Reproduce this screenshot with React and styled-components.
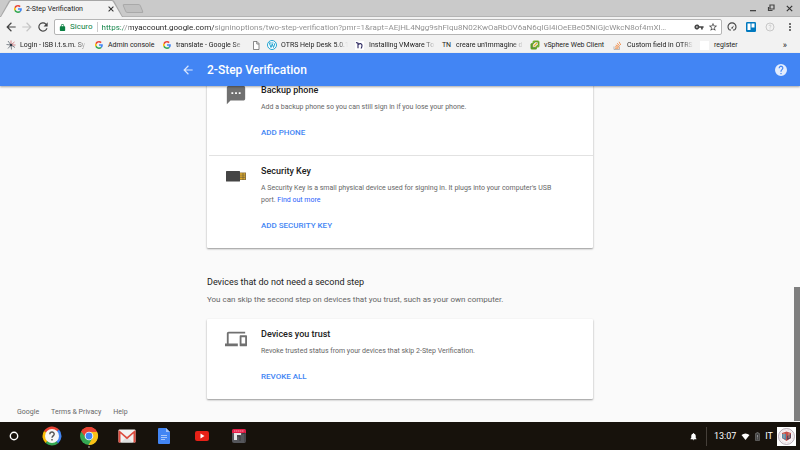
import React from 'react';
import styled, { createGlobalStyle } from 'styled-components';

const GlobalStyle = createGlobalStyle`
  * { box-sizing: border-box; }
  body { margin: 0; font-family: Roboto, "Liberation Sans", sans-serif; }
  button { border: 0; padding: 0; background: none; font: inherit; color: inherit; cursor: pointer; }
  a { color: inherit; text-decoration: none; }
  h1, h2, h3, p { margin: 0; }
  svg { display: block; flex: none; }
`;

const Screen = styled.div`
  display: flex;
  flex-direction: column;
  height: 100vh;
  overflow: hidden;
  background: #fafafa;
`;

/* ---------- browser frame ---------- */

const TabStrip = styled.div`
  display: flex;
  align-items: flex-end;
  height: 17px;
  flex: none;
  background: #cacaca;
  border-bottom: 1px solid #b4b4b4;
`;

const TabEdge = styled.div`
  width: 123px;
  height: 17px;
  margin-bottom: -1px;
  padding: 1px 1px 0;
  background: #a6a6a6;
  clip-path: polygon(0 100%, 9px 4%, 11px 0, 112px 0, 114px 4%, 100% 100%);
`;

const Tab = styled.div`
  display: flex;
  align-items: center;
  height: 16px;
  padding: 0 7px 0 13px;
  background: #f2f2f2;
  clip-path: polygon(0 100%, 9px 4%, 10px 0, 111px 0, 112px 4%, 100% 100%);
  font-size: 7px;
  line-height: 16px;
  color: #222;
`;

const TabTitle = styled.span`
  flex: 1;
  margin-left: 4px;
  white-space: nowrap;
`;

const NewTab = styled.button`
  width: 18px;
  height: 9px;
  margin: 0 0 3px 1px;
  background: #c0c0c0;
  border: 1px solid #a9a9a9;
  border-radius: 2px;
  transform: skewX(22deg);
`;

const WindowControls = styled.div`
  display: flex;
  align-self: center;
  gap: 10px;
  margin-left: auto;
  padding-right: 6px;
`;

const Toolbar = styled.div`
  display: flex;
  align-items: center;
  height: 20px;
  flex: none;
  padding: 0 4px;
  background: #f2f2f2;
`;

const NavButtons = styled.div`
  display: flex;
  gap: 2px;
  width: 50px;
`;

const AddressBar = styled.div`
  display: flex;
  align-items: center;
  flex: 1;
  min-width: 0;
  height: 16px;
  padding: 0 3px 0 4px;
  gap: 4px;
  background: #fff;
  border: 1px solid #b5b5b5;
  border-radius: 2px;
  font-size: 8px;
`;

const Secure = styled.span`
  padding-right: 4px;
  border-right: 1px solid #ccc;
  line-height: 10px;
  color: #0b8043;
`;

const Address = styled.input`
  flex: 1;
  min-width: 0;
  height: 14px;
  padding: 0;
  border: 0;
  outline: 0;
  font-family: inherit;
  font-size: 8px;
  color: transparent;
  background: linear-gradient(90deg, #0b8043 21px, #8b8b8b 21px 27px, #222 27px 112px, #8b8b8b 112px);
  background-clip: text;
`;

const Extensions = styled.div`
  display: flex;
  align-items: center;
  gap: 9px;
  padding-left: 5px;
`;

const Bookmarks = styled.nav`
  display: flex;
  align-items: center;
  gap: 7px;
  height: 16px;
  flex: none;
  padding: 0 13px 0 6px;
  background: #f2f2f2;
  font-size: 7px;
  color: #222;
`;

const Bookmark = styled.a`
  display: flex;
  align-items: center;
  gap: 5px;
  flex: none;
`;

const BookmarkIcon = styled.span`
  display: flex;
  justify-content: center;
  width: 9px;
  font-size: 7px;
`;

const BookmarkLabel = styled.span`
  width: ${(p) => p.$width}px;
  white-space: nowrap;
  line-height: 12px;
  mask-image: ${(p) => (p.$fade ? 'linear-gradient(90deg, #000 84%, transparent)' : 'none')};
`;

const More = styled.button`
  margin-left: auto;
  font-size: 9px;
`;

/* ---------- account page ---------- */

const AppBar = styled.header`
  position: relative;
  z-index: 1;
  display: grid;
  grid-template-columns: 1fr 386px 1fr;
  align-items: center;
  height: 33px;
  flex: none;
  background: #4285f4;
  color: #fff;
  box-shadow: 0 1px 2px rgba(0, 0, 0, 0.35);
`;

const BarButton = styled.button`
  justify-self: end;
  margin-right: ${(p) => p.$gap}px;
`;

const BarTitle = styled.h1`
  font-size: 12px;
  font-weight: 500;
  line-height: 16px;
`;

const Body = styled.div`
  display: flex;
  flex: 1;
  min-height: 0;
`;

const Page = styled.main`
  display: flex;
  flex-direction: column;
  justify-content: flex-end;
  flex: 1;
  overflow: hidden;
`;

const ScrollTrack = styled.div`
  display: flex;
  align-items: flex-end;
  width: 6px;
  margin-left: -6px;
  padding-bottom: 1px;
`;

const ScrollThumb = styled.div`
  width: 6px;
  height: 40%;
  background: #7f7f7f;
`;

const Column = styled.div`
  width: 386px;
  max-width: 100%;
  margin: 0 auto;
`;

const Card = styled.section`
  background: #fff;
  border-radius: 1px;
  box-shadow: 0 1px 2px rgba(0, 0, 0, 0.4);
`;

const Option = styled.article`
  display: grid;
  grid-template-columns: 36px 1fr;
  margin-left: 2px;
  padding: 9px 30px 16px 16px;
  & + & { border-top: 1px solid #e2e2e2; }
`;

const OptionIcon = styled.div`
  display: flex;
  align-items: center;
  height: 22px;
`;

const OptionTitle = styled.h3`
  font-size: 9px;
  font-weight: 500;
  line-height: 12px;
  color: #212121;
`;

const OptionText = styled.p`
  margin-top: 5px;
  font-size: 7px;
  line-height: 12px;
  color: #666;
  a { color: #2a62fb; }
`;

const Action = styled.button`
  margin-top: 14px;
  font-size: 8px;
  font-weight: 500;
  line-height: 12px;
  color: #4285f4;
`;

const Intro = styled.div`
  padding: 27px 0 12px;
`;

const IntroTitle = styled.h2`
  font-size: 9px;
  font-weight: 400;
  line-height: 14px;
  color: #222;
`;

const IntroText = styled.p`
  margin-top: 4px;
  font-size: 8px;
  line-height: 14px;
  color: #666;
`;

const Footer = styled.footer`
  display: flex;
  gap: 12px;
  padding: 7px 17px 4px;
  font-size: 7px;
  line-height: 12px;
  color: #666;
`;

/* ---------- shelf ---------- */

const Shelf = styled.footer`
  display: flex;
  align-items: center;
  justify-content: space-between;
  height: 28px;
  flex: none;
  padding: 0 4px;
  background: #17120c;
  color: #fff;
`;

const Launchers = styled.div`
  display: flex;
  align-items: center;
  justify-content: space-between;
  width: 245px;
`;

const Launcher = styled.button`
  display: flex;
  justify-content: center;
  width: 20px;
`;

const Tray = styled.div`
  display: flex;
  align-items: center;
  gap: 5px;
  font-size: 9px;
  line-height: 12px;
`;

const Clock = styled.time`
  display: flex;
  align-items: center;
  height: 19px;
  margin-left: 3px;
  padding-left: 7px;
  border-left: 1px solid #453f39;
`;

const Account = styled.div`
  display: flex;
  align-items: center;
  gap: 4px;
`;

/* ---------- icons ---------- */

const Svg = ({ size = 9, w, h, box = 24, children, ...rest }) => (
  <svg width={w || size} height={h || size} viewBox={typeof box === 'string' ? box : `0 0 ${box} ${box}`} fill="currentColor" aria-hidden="true" {...rest}>
    {children}
  </svg>
);

const GoogleG = ({ size = 8 }) => (
  <Svg size={size} box={48}>
    <path fill="#EA4335" d="M24 9.5c3.5 0 6.700 1.200 9.200 3.600l6.900-6.900C35.900 2.400 30.500 0 24 0 14.600 0 6.500 5.400 2.600 13.200l8 6.200C12.400 13.700 17.700 9.500 24 9.500z" />
    <path fill="#4285F4" d="M47 24.600c0-1.600-.2-3.100-.4-4.600H24v9h12.900c-.6 3-2.300 5.500-4.800 7.200l7.700 6C44.400 38 47 32 47 24.600z" />
    <path fill="#FBBC05" d="M10.500 28.600a14.500 14.500 0 0 1 0-9.200l-8-6.200a24 24 0 0 0 0 21.600z" />
    <path fill="#34A853" d="M24 48c6.500 0 11.900-2.100 15.900-5.800l-7.700-6c-2.200 1.500-4.900 2.300-8.200 2.300-6.300 0-11.600-4.200-13.500-9.900l-8 6.200C6.500 42.600 14.600 48 24 48z" />
  </Svg>
);

const Arrow = ({ size = 14, flip, color }) => (
  <Svg size={size} color={color} transform={flip ? 'scale(-1 1)' : undefined}>
    <path d="M20 11H7.830l5.590-5.590L12 4l-8 8 8 8 1.410-1.410L7.830 13H20z" />
  </Svg>
);

const Reload = () => (
  <Svg size={14} color="#444">
    <path d="M17.650 6.350A8 8 0 1 0 19.730 14h-2.080A6 6 0 1 1 12 6c1.660 0 3.140.690 4.220 1.780L13 11h7V4z" />
  </Svg>
);

const Close = ({ size = 8 }) => (
  <Svg size={size} box={10} color="#333"><path d="M2 2l6 6M8 2L2 8" stroke="currentColor" strokeWidth="1.3" /></Svg>
);

const Lock = () => (
  <Svg size={7} box="4 1 16 21" color="#0b8043">
    <path d="M18 8h-1V6A5 5 0 0 0 7 6v2H6a2 2 0 0 0-2 2v10c0 1.100.9 2 2 2h12a2 2 0 0 0 2-2V10a2 2 0 0 0-2-2zM9 6a3 3 0 0 1 6 0v2H9z" />
  </Svg>
);

const Key = () => (
  <Svg size={10} color="#444">
    <path d="M12.650 10a6 6 0 1 0 0 4H17v4h4v-4h2v-4zM7 14a2 2 0 1 1 0-4 2 2 0 0 1 0 4z" />
  </Svg>
);

const Star = () => (
  <Svg size={10} color="#444">
    <path d="M22 9.240l-7.190-.62L12 2 9.190 8.630 2 9.240l5.460 4.730L5.820 21 12 17.270 18.180 21l-1.630-7.030zM12 15.400l-3.760 2.270 1-4.280-3.320-2.880 4.380-.38L12 6.100l1.710 4.040 4.380.38-3.320 2.880 1 4.280z" />
  </Svg>
);

const Gauge = () => (
  <Svg size={10} box={20} color="#444">
    <path d="M5 16a8 8 0 1 1 10 0" fill="none" stroke="currentColor" strokeWidth="2.200" />
    <path d="M8 12l6-5-3.500 7z" /><path d="M5 15h3v2H5zM12 15h3v2h-3z" />
  </Svg>
);

const Trello = () => (
  <Svg size={10} box={20}><rect width="20" height="20" rx="2.500" fill="#0079bf" /><path fill="#fff" d="M3 3h6v13H3zM11 3h6v8h-6z" /></Svg>
);

const FaintCircle = () => (
  <Svg size={10} box={20}>
    <circle cx="10" cy="10" r="8" fill="none" stroke="#bdbdbd" strokeWidth="1.600" />
    <path d="M8 8c0-3 4-3 4 0 0 1.500-2 1.700-2 3.500M10 13v2" fill="none" stroke="#c4c4c4" strokeWidth="1.500" />
  </Svg>
);

const Dots = () => (
  <Svg w={12} h={10} box="0 0 12 10" color="#444"><circle cx="6" cy="2" r="1" /><circle cx="6" cy="5" r="1" /><circle cx="6" cy="8" r="1" /></Svg>
);

const Burst = () => (
  <Svg size={10} box={20}>
    <path d="M10 10L4 2M10 10L1 9M10 10L4 17M10 10L11 19M10 10L18 15" stroke="#59616b" strokeWidth="1.500" />
    <path d="M10 10L10 1M10 10L17 4M10 10L19 10" stroke="#c0484d" strokeWidth="1.300" />
    <circle cx="10" cy="10" r="2.500" fill="#2e3b49" />
  </Svg>
);

const PageIcon = () => (
  <Svg w={8} h={9} box="0 0 16 18"><path d="M3 1h7l4 4v12H3zM9.500 1v5H14" fill="#fff" stroke="#5c5c5c" strokeWidth="1.400" /></Svg>
);

const WordPress = () => (
  <Svg size={10} box={20}>
    <circle cx="10" cy="10" r="9" fill="#fff" stroke="#21a3d0" strokeWidth="2" />
    <path d="M4 6h4M8.500 6H13M4.800 6.500L8 15l2.500-7L13 15l2.800-8.500" fill="none" stroke="#21a3d0" strokeWidth="2" />
  </Svg>
);

const CurlyN = () => (
  <Svg size={9} box={18}><rect width="18" height="18" fill="#fff" /><path d="M2 3l4 1.500v10M6 7c5-3 8-2 8 2 0 3-.5 4-2 6" fill="none" stroke="#28245c" strokeWidth="2.200" /></Svg>
);

const VSphere = () => (
  <Svg size={10} box={20}>
    <rect x="1" y="6" width="13" height="13" rx="3" fill="#5c9f24" /><rect x="5" y="1" width="14" height="14" rx="3" fill="#75b52f" />
    <path d="M5 15v-5l5-6h6v5l-6 6z" fill="#fff" stroke="#395f20" strokeWidth="1" /><path d="M7 13l7-7" stroke="#e3b226" strokeWidth="2.500" />
  </Svg>
);

const StackIcon = () => (
  <Svg size={9} box={18}>
    <path d="M2 11v6h11v-6" fill="none" stroke="#aaa" strokeWidth="1.600" />
    <path d="M4 14.500h7M4.200 11.500l7 1M5.500 8l6.500 3M8 4.500l5.500 5M12 1.500l3.500 6.500" stroke="#f08b45" strokeWidth="1.800" />
  </Svg>
);

const BlankIcon = () => <Svg size={9} box={9}><rect width="9" height="9" fill="#fff" /></Svg>;

const HelpCircle = () => (
  <Svg size={12} box="2 2 20 20" color="#e4edfd">
    <path d="M12 2a10 10 0 1 0 0 20 10 10 0 0 0 0-20zm1 17h-2v-2h2zm2.070-7.750l-.9.920C13.450 12.900 13 13.500 13 15h-2v-.5c0-1.100.45-2.100 1.170-2.830l1.240-1.260A2 2 0 1 0 10 9H8a4 4 0 1 1 7.070 2.250z" />
  </Svg>
);

const MessageIcon = () => (
  <Svg size={22} color="#707070">
    <path d="M20 2H4c-1.100 0-1.990.9-1.990 2L2 22l4-4h14c1.100 0 2-.9 2-2V4c0-1.100-.9-2-2-2zM9 11H7V9h2zm4 0h-2V9h2zm4 0h-2V9h2z" />
  </Svg>
);

const UsbKey = () => (
  <Svg w={22} h={12} box="0 0 22 12">
    <rect x="1" y="1" width="14" height="10.500" rx=".5" fill="#454545" /><rect x="15" y="2.500" width="6" height="7.500" fill="#8d7440" />
    <path d="M15 4h5M15 6.200h5M15 8.500h5" stroke="#e0ac2b" strokeWidth="1.300" /><path d="M18 3v7" stroke="#5d4d2e" strokeWidth=".6" />
  </Svg>
);

const DevicesIcon = () => (
  <Svg size={22} box={24} color="#707070">
    <path d="M4 6h18V4H4c-1.100 0-2 .9-2 2v11H0v3h14v-3H4zm19 2h-6c-.55 0-1 .45-1 1v10c0 .55.45 1 1 1h6c.55 0 1-.45 1-1V9c0-.55-.45-1-1-1zm-1 9h-4v-7h4z" />
  </Svg>
);

const HomeRing = () => <Svg size={10} box={10}><circle cx="5" cy="5" r="3.700" fill="none" stroke="#fff" strokeWidth="1.400" /></Svg>;

const HelpApp = () => (
  <Svg size={20} box={20}>
    <path d="M10 10L2 5A9.500 9.500 0 0 1 17 3.600z" fill="#ea4335" /><path d="M10 10l7-6.400A9.500 9.500 0 0 1 16 17.400z" fill="#4285f4" />
    <path d="M10 10l6 7.400A9.500 9.500 0 0 1 3.500 17z" fill="#34a853" /><path d="M10 10l-6.500 7A9.500 9.500 0 0 1 2 5z" fill="#fbbc05" />
    <circle cx="10" cy="10" r="7" fill="#f7f7f7" />
    <path d="M7.800 8.200c.2-3 4.600-2.700 4.400 0-.1 1.600-2.200 1.800-2.200 3.600M10 13v1.500" fill="none" stroke="#555" strokeWidth="1.400" />
  </Svg>
);

const ChromeApp = () => (
  <Svg w={20} h={24} box="0 0 20 24">
    <circle cx="10" cy="12" r="9" fill="#34a853" />
    <path d="M10 12L2.200 7.500A9 9 0 0 1 17.800 7.500z" fill="#ea4335" /><path d="M10 7.800h8A9 9 0 0 1 9.500 21l4-7z" fill="#fbc116" />
    <path d="M2.200 7.500L7 14l3-6.200h8A9 9 0 0 0 2.200 7.500z" fill="#ea4335" />
    <circle cx="10" cy="12" r="4.300" fill="#fff" /><circle cx="10" cy="12" r="3.400" fill="#4285f4" />
    <circle cx="10" cy="23" r=".8" fill="#bbb" />
  </Svg>
);

const GmailApp = () => (
  <Svg w={18} h={14} box="0 0 18 14">
    <rect x=".5" y=".5" width="17" height="13" rx="1" fill="#f1f1f1" /><path d="M3 13.500l6-6 6 6z" fill="#dedede" />
    <path d="M.5 13.500V1.500h.9L9 8l7.600-6.500h.9v12h-2V4.600L9 10.200 2.500 4.600v8.900z" fill="#dd4b3e" />
  </Svg>
);

const DocsApp = () => (
  <Svg w={14} h={18} box="0 0 14 18">
    <path d="M2 1h7l4 4v11a1 1 0 0 1-1 1H2a1 1 0 0 1-1-1V2a1 1 0 0 1 1-1z" fill="#4285f4" /><path d="M9 1l4 4H9z" fill="#a1c2fa" />
    <path d="M4 8.500h6M4 10.500h6M4 12.500h4" stroke="#a9c7fb" />
  </Svg>
);

const YouTubeApp = () => (
  <Svg w={16} h={12} box="0 0 16 12"><rect x="1" y="1" width="14" height="10" rx="2" fill="#e62117" /><path d="M6.500 3.500l4 2.500-4 2.500z" fill="#fff" /></Svg>
);

const RecorderApp = () => (
  <Svg size={16} box={16}>
    <rect x="1" y="1" width="14" height="14" rx="2" fill="#55565b" /><path d="M1 5V3a2 2 0 0 1 2-2h10a2 2 0 0 1 2 2v2z" fill="#e51c47" />
    <path d="M3 3h10" stroke="#f59cad" strokeWidth="1" strokeDasharray="1.500 .5" /><path d="M3 5h7v2H6v5H3z" fill="#e4e4e4" /><path d="M6 8h3v5M11 6l3-1v9" fill="none" stroke="#303136" strokeWidth=".8" />
  </Svg>
);

const Bell = () => <Svg size={9}><path d="M12 22a2 2 0 0 0 2-2h-4a2 2 0 0 0 2 2zm6-6v-5c0-3.100-1.600-5.600-4.500-6.300V4a1.500 1.500 0 0 0-3 0v.7C7.600 5.400 6 7.900 6 11v5l-2 2v1h16v-1z" /></Svg>;
const Wifi = () => <Svg size={9} box={18}><path d="M9 16L1 6c5-4 11-4 16 0z" /></Svg>;
const Battery = () => <Svg w={5} h={9} box="0 0 10 18"><path d="M3.500 1h3v2H9v14H1V3h2.500z" fill="#444" stroke="#888" /><path d="M5 6v5M5 13v1.500" stroke="#aaa" strokeWidth="1.500" /></Svg>;

const Avatar = () => (
  <Svg size={19} box={19}>
    <rect width="19" height="19" fill="#fff" /><circle cx="9.500" cy="9.500" r="8" fill="#f8f5f6" stroke="#a797a4" strokeWidth=".8" />
    <circle cx="9.500" cy="9.500" r="6.300" fill="none" stroke="#ddc9d0" strokeWidth=".7" strokeDasharray="1 .7" />
    <path d="M5 6l4.500-1.500L14 6v5l-4.500 3L5 11z" fill="#c4504a" /><path d="M5 7h4v6l-4-2z" fill="#5889a8" /><path d="M10 9l4-2v4l-4 2z" fill="#5c4359" />
    <path d="M7 6v5M12 6v5" stroke="#e0b79a" strokeWidth=".7" />
  </Svg>
);

const pageAddress =
  'https://myaccount.google.com/signinoptions/two-step-verification?pmr=1&rapt=AEjHL4Ngg9shFIqu8N02KwOaRbOV6aN6qIGI4iOeEBe05NiGjcWkcN8of4mXI…';

const bookmarks = [
  { icon: <Burst />, label: 'Login - ISB i.t.s.m. Sy', width: 67, fade: true },
  { icon: <GoogleG />, label: 'Admin console', width: 47 },
  { icon: <GoogleG />, label: 'translate - Google Se', width: 68, fade: true },
  { icon: <PageIcon />, name: 'Untitled' },
  { icon: <WordPress />, label: 'OTRS Help Desk 5.0.1', width: 67, fade: true },
  { icon: <CurlyN />, label: 'Installing VMware To', width: 66, fade: true },
  { icon: 'TN', label: "creare un'immagine d", width: 67, fade: true },
  { icon: <VSphere />, label: 'vSphere Web Client', width: 62 },
  { icon: <StackIcon />, label: 'Custom field in OTRS', width: 66, fade: true },
  { icon: <BlankIcon />, label: 'register', width: 26 },
];

const launchers = [
  ['Launcher', HomeRing], ['Get Help', HelpApp], ['Chrome', ChromeApp], ['Gmail', GmailApp],
  ['Docs', DocsApp], ['YouTube', YouTubeApp], ['Recorder', RecorderApp],
];

const StepOption = ({ icon, title, action, children }) => (
  <Option>
    <OptionIcon>{icon}</OptionIcon>
    <div>
      <OptionTitle>{title}</OptionTitle>
      <OptionText>{children}</OptionText>
      <Action>{action}</Action>
    </div>
  </Option>
);

export default function App() {
  return (
    <Screen>
      <GlobalStyle />
      <TabStrip>
        <TabEdge>
          <Tab>
            <GoogleG />
            <TabTitle>2-Step Verification</TabTitle>
            <button aria-label="Close tab"><Close /></button>
          </Tab>
        </TabEdge>
        <NewTab aria-label="New tab" />
        <WindowControls>
          <button aria-label="Minimize"><Svg size={8} box={8}><path d="M1 6h6v1.300H1z" fill="#444" /></Svg></button>
          <button aria-label="Restore"><Svg size={8} box={8}><path d="M3 1h4v4H3zM1.500 3v3.500H5.500" fill="none" stroke="#444" strokeWidth="1.200" /></Svg></button>
          <button aria-label="Close window"><Close size={9} /></button>
        </WindowControls>
      </TabStrip>
      <Toolbar>
        <NavButtons>
          <button aria-label="Back"><Arrow color="#444" /></button>
          <button aria-label="Forward"><Arrow color="#c4c4c4" flip /></button>
          <button aria-label="Reload"><Reload /></button>
        </NavButtons>
        <AddressBar>
          <Lock />
          <Secure>Sicuro</Secure>
          <Address type="text" aria-label="Address" defaultValue={pageAddress} spellCheck={false} />
          <Key />
          <Star />
        </AddressBar>
        <Extensions>
          <button aria-label="Page speed"><Gauge /></button>
          <button aria-label="Trello"><Trello /></button>
          <button aria-label="Extension"><FaintCircle /></button>
          <button aria-label="Menu"><Dots /></button>
        </Extensions>
      </Toolbar>
      <Bookmarks aria-label="Bookmarks">
        {bookmarks.map((b, i) => (
          <Bookmark href="#" key={i} aria-label={b.name}>
            <BookmarkIcon>{b.icon}</BookmarkIcon>
            {b.label && <BookmarkLabel $width={b.width} $fade={b.fade}>{b.label}</BookmarkLabel>}
          </Bookmark>
        ))}
        <More>»</More>
      </Bookmarks>
      <AppBar>
        <BarButton $gap={12} aria-label="Back"><Arrow color="#d9e7fd" /></BarButton>
        <BarTitle>2-Step Verification</BarTitle>
        <BarButton $gap={13} aria-label="Help"><HelpCircle /></BarButton>
      </AppBar>
      <Body>
        <Page>
          <Column>
            <Card>
              <StepOption icon={<MessageIcon />} title="Backup phone" action="ADD PHONE">
                Add a backup phone so you can still sign in if you lose your phone.
              </StepOption>
              <StepOption icon={<UsbKey />} title="Security Key" action="ADD SECURITY KEY">
                A Security Key is a small physical device used for signing in. It plugs into your computer's USB port. <a href="#">Find out more</a>
              </StepOption>
            </Card>
            <Intro>
              <IntroTitle>Devices that do not need a second step</IntroTitle>
              <IntroText>You can skip the second step on devices that you trust, such as your own computer.</IntroText>
            </Intro>
            <Card>
              <StepOption icon={<DevicesIcon />} title="Devices you trust" action="REVOKE ALL">
                Revoke trusted status from your devices that skip 2-Step Verification.
              </StepOption>
            </Card>
          </Column>
          <Footer>
            <a href="#">Google</a>
            <a href="#">Terms &amp; Privacy</a>
            <a href="#">Help</a>
          </Footer>
        </Page>
        <ScrollTrack><ScrollThumb /></ScrollTrack>
      </Body>
      <Shelf>
        <Launchers>
          {launchers.map(([name, Icon]) => (
            <Launcher key={name} aria-label={name}><Icon /></Launcher>
          ))}
        </Launchers>
        <Tray>
          <Bell />
          <Clock>13:07</Clock>
          <Wifi />
          <Battery />
          <Account>IT<Avatar /></Account>
        </Tray>
      </Shelf>
    </Screen>
  );
}
